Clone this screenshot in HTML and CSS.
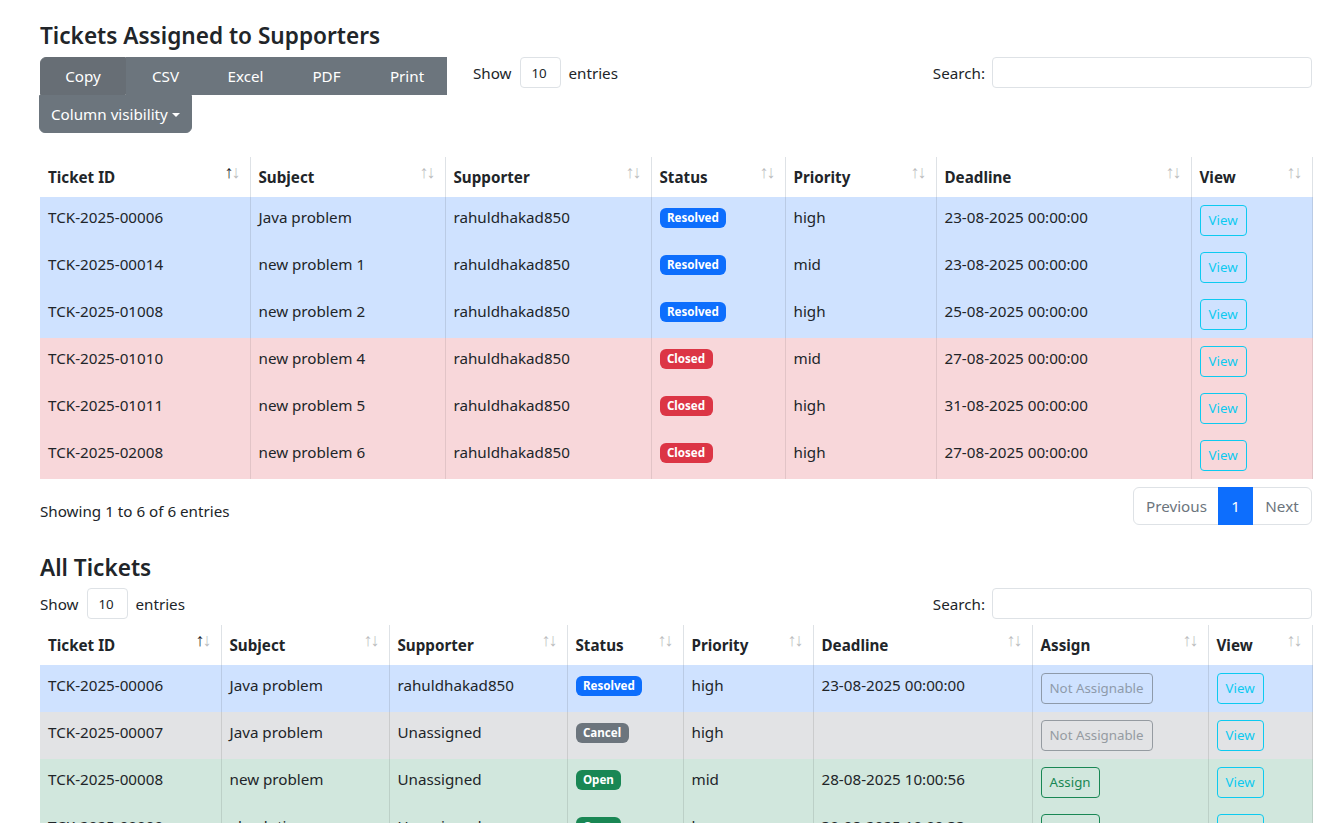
FILE: index.html
```html
<!DOCTYPE html>
<html lang="en">
<head>
<meta charset="utf-8">
<title>Tickets</title>
<link rel="stylesheet" href="styles.css">
</head>
<body>
<div class="page">
  <section class="block block-assigned">
    <h4 class="title">Tickets Assigned to Supporters</h4>
    <div class="toolbar">
      <div class="toolbar-left">
        <div class="dt-buttons">
          <button class="btn btn-secondary btn-first">Copy</button>
          <button class="btn btn-secondary w79">CSV</button>
          <button class="btn btn-secondary w81">Excel</button>
          <button class="btn btn-secondary w81">PDF</button>
          <button class="btn btn-secondary w80 btn-lastrow">Print</button>
          <button class="btn btn-secondary btn-colvis">Column visibility<span class="caret"></span></button>
        </div>
        <div class="length">Show <span class="select-sm">10</span> entries</div>
      </div>
      <div class="search">Search: <span class="search-input"></span></div>
    </div>
    <table class="dt t1">
      <colgroup>
        <col style="width:210px"><col style="width:195px"><col style="width:206px"><col style="width:134px"><col style="width:151px"><col style="width:255px"><col style="width:121px">
      </colgroup>
      <thead>
        <tr>
          <th class="sort asc">Ticket ID</th>
          <th class="sort">Subject</th>
          <th class="sort">Supporter</th>
          <th class="sort">Status</th>
          <th class="sort">Priority</th>
          <th class="sort">Deadline</th>
          <th class="sort">View</th>
        </tr>
      </thead>
      <tbody>
        <tr class="row-primary"><td>TCK-2025-00006</td><td>Java problem</td><td>rahuldhakad850</td><td><span class="badge bg-primary">Resolved</span></td><td>high</td><td>23-08-2025 00:00:00</td><td><button class="btn-sm outline-info">View</button></td></tr>
        <tr class="row-primary"><td>TCK-2025-00014</td><td>new problem 1</td><td>rahuldhakad850</td><td><span class="badge bg-primary">Resolved</span></td><td>mid</td><td>23-08-2025 00:00:00</td><td><button class="btn-sm outline-info">View</button></td></tr>
        <tr class="row-primary"><td>TCK-2025-01008</td><td>new problem 2</td><td>rahuldhakad850</td><td><span class="badge bg-primary">Resolved</span></td><td>high</td><td>25-08-2025 00:00:00</td><td><button class="btn-sm outline-info">View</button></td></tr>
        <tr class="row-danger"><td>TCK-2025-01010</td><td>new problem 4</td><td>rahuldhakad850</td><td><span class="badge bg-danger">Closed</span></td><td>mid</td><td>27-08-2025 00:00:00</td><td><button class="btn-sm outline-info">View</button></td></tr>
        <tr class="row-danger"><td>TCK-2025-01011</td><td>new problem 5</td><td>rahuldhakad850</td><td><span class="badge bg-danger">Closed</span></td><td>high</td><td>31-08-2025 00:00:00</td><td><button class="btn-sm outline-info">View</button></td></tr>
        <tr class="row-danger"><td>TCK-2025-02008</td><td>new problem 6</td><td>rahuldhakad850</td><td><span class="badge bg-danger">Closed</span></td><td>high</td><td>27-08-2025 00:00:00</td><td><button class="btn-sm outline-info">View</button></td></tr>
      </tbody>
    </table>
    <div class="table-footer">
      <div class="info">Showing 1 to 6 of 6 entries</div>
      <ul class="pagination">
        <li class="page-item disabled prev"><span>Previous</span></li>
        <li class="page-item active"><span>1</span></li>
        <li class="page-item disabled next"><span>Next</span></li>
      </ul>
    </div>
  </section>

  <section class="block block-all">
    <h4 class="title">All Tickets</h4>
    <div class="toolbar toolbar-simple">
      <div class="length">Show <span class="select-sm">10</span> entries</div>
      <div class="search">Search: <span class="search-input"></span></div>
    </div>
    <table class="dt t2">
      <colgroup>
        <col style="width:181px"><col style="width:168px"><col style="width:178px"><col style="width:116px"><col style="width:130px"><col style="width:219px"><col style="width:176px"><col style="width:104px">
      </colgroup>
      <thead>
        <tr>
          <th class="sort asc">Ticket ID</th>
          <th class="sort">Subject</th>
          <th class="sort">Supporter</th>
          <th class="sort">Status</th>
          <th class="sort">Priority</th>
          <th class="sort">Deadline</th>
          <th class="sort">Assign</th>
          <th class="sort">View</th>
        </tr>
      </thead>
      <tbody>
        <tr class="row-primary"><td>TCK-2025-00006</td><td>Java problem</td><td>rahuldhakad850</td><td><span class="badge bg-primary">Resolved</span></td><td>high</td><td>23-08-2025 00:00:00</td><td><button class="btn-sm outline-secondary" disabled>Not Assignable</button></td><td><button class="btn-sm outline-info">View</button></td></tr>
        <tr class="row-secondary"><td>TCK-2025-00007</td><td>Java problem</td><td>Unassigned</td><td><span class="badge bg-secondary">Cancel</span></td><td>high</td><td></td><td><button class="btn-sm outline-secondary" disabled>Not Assignable</button></td><td><button class="btn-sm outline-info">View</button></td></tr>
        <tr class="row-success"><td>TCK-2025-00008</td><td>new problem</td><td>Unassigned</td><td><span class="badge bg-success">Open</span></td><td>mid</td><td>28-08-2025 10:00:56</td><td><button class="btn-sm outline-success">Assign</button></td><td><button class="btn-sm outline-info">View</button></td></tr>
        <tr class="row-success"><td>TCK-2025-00009</td><td>absolution</td><td>Unassigned</td><td><span class="badge bg-success">Open</span></td><td>low</td><td>30-08-2025 10:00:33</td><td><button class="btn-sm outline-success">Assign</button></td><td><button class="btn-sm outline-info">View</button></td></tr>
      </tbody>
    </table>
  </section>
</div>
</body>
</html>
```

FILE: styles.css
```css
* { box-sizing: border-box; }

body {
  margin: 0;
  font-family: "Noto Sans", "Open Sans", "Liberation Sans", sans-serif;
  font-size: 15.2px;
  line-height: 24px;
  color: #212529;
  background: #fff;
}

.page {
  padding: 21px 29px 40px 40px;
}

.title {
  margin: 0 0 7px;
  font-size: 22.6px;
  font-weight: 600;
  line-height: 29px;
}

.block-all {
  margin-top: 28px;
}
.block-all .title {
  margin-bottom: 6px;
}

/* toolbar */
.toolbar {
  display: flex;
  justify-content: space-between;
  align-items: flex-start;
}

.toolbar-left {
  display: flex;
  align-items: flex-start;
}

.dt-buttons {
  display: flex;
  flex-wrap: wrap;
  width: 408px;
}

.btn {
  font-family: inherit;
  font-size: 15.2px;
  line-height: 24px;
  height: 38px;
  padding: 6px 12px;
  border: 1px solid transparent;
  border-radius: 0;
  cursor: pointer;
  white-space: nowrap;
}

.btn-secondary {
  background: #6c757d;
  border-color: #6c757d;
  color: #fff;
}

.btn-first {
  width: 86px;
  background: #676e75;
  border-color: #676e75;
  border-top-left-radius: 6px;
}
.w79 { width: 79px; }
.w80 { width: 80px; }
.w81 { width: 81px; }

.btn-colvis {
  margin-left: -1px;
  width: 153px;
  border-radius: 0 0 6px 6px;
  display: flex;
  align-items: center;
  padding: 6px 11px;
}

.caret {
  display: inline-block;
  margin-left: 4px;
  border-top: 4.8px solid #fff;
  border-left: 4.8px solid transparent;
  border-right: 4.8px solid transparent;
  margin-top: 1px;
}

.length {
  display: flex;
  align-items: center;
  height: 31px;
  margin-left: 25px;
  white-space: pre;
}

.toolbar-simple .length {
  margin-left: 0;
}

.select-sm {
  display: inline-flex;
  align-items: center;
  width: 41px;
  height: 31px;
  padding: 0 8px 0 11px;
  border: 1px solid #dee2e6;
  border-radius: 4px;
  font-size: 13.3px;
  margin: 0 4px;
}

.search {
  display: flex;
  align-items: center;
  height: 31px;
}

.search-input {
  display: inline-block;
  width: 320px;
  height: 31px;
  margin-left: 7px;
  border: 1px solid #dee2e6;
  border-radius: 4px;
  background: #fff;
}

/* table */
.dt {
  width: 1272px;
  table-layout: fixed;
  border-collapse: collapse;
  margin-top: 6px;
}
.t1 { margin-top: 24px; }

.dt th,
.dt td {
  padding: 8px;
  text-align: left;
  vertical-align: top;
  border-right: 1px solid #dee2e6;
  white-space: nowrap;
  overflow: hidden;
}

.dt th {
  font-weight: 700;
  position: relative;
  padding-right: 26px;
  height: 40px;
}

.dt td {
  height: 47px;
}

.sort::before,
.sort::after {
  position: absolute;
  top: 2px;
  font-size: 18px;
  line-height: 24px;
  opacity: 0.3;
  font-weight: 300;
  color: #212529;
}
.sort::before { content: "\2191"; right: 16px; }
.sort::after { content: "\2193"; right: 9px; }
.sort.asc::before { opacity: 1; }

.row-primary td { background: #cfe2ff; border-right-color: #bacbe5; }
.row-danger td { background: #f8d7da; border-right-color: #e2c4c7; }
.row-secondary td { background: #e2e3e5; border-right-color: #cbcccd; }
.row-success td { background: #d1e7dd; border-right-color: #bcd0c7; }

.badge {
  display: inline-block;
  padding: 4.2px 7.4px;
  font-size: 11.6px;
  font-weight: 700;
  line-height: 1;
  color: #fff;
  border-radius: 6px;
  vertical-align: 1px;
}
.bg-primary { background: #0d6efd; }
.bg-danger { background: #dc3545; }
.bg-secondary { background: #6c757d; }
.bg-success { background: #198754; }

.btn-sm {
  display: inline-block;
  vertical-align: top;
  font-family: inherit;
  font-size: 13.3px;
  line-height: 21px;
  height: 31px;
  padding: 4px 8px;
  border: 1px solid;
  border-radius: 4px;
  background: transparent;
  cursor: pointer;
}
.outline-info { color: #0dcaf0; border-color: #0dcaf0; }
.outline-success { color: #198754; border-color: #198754; }
.outline-secondary { color: #6c757d; border-color: #6c757d; opacity: 0.65; }

/* footer */
.table-footer {
  display: flex;
  justify-content: space-between;
  align-items: flex-start;
  margin-top: 8px;
}

.info {
  padding-top: 12px;
}

.pagination {
  display: flex;
  list-style: none;
  margin: 0;
  padding: 0;
}

.page-item span {
  display: block;
  height: 38px;
  padding: 6px 12px;
  border: 1px solid #dee2e6;
  color: #6c757d;
  background: #fff;
  text-align: center;
}
.page-item + .page-item span { margin-left: -1px; }
.page-item.prev span { border-radius: 6px 0 0 6px; width: 86px; }
.page-item.next span { border-radius: 0 6px 6px 0; width: 60px; }
.page-item.active span {
  background: #0d6efd;
  border-color: #0d6efd;
  color: #fff;
  width: 35px;
  position: relative;
}
```
